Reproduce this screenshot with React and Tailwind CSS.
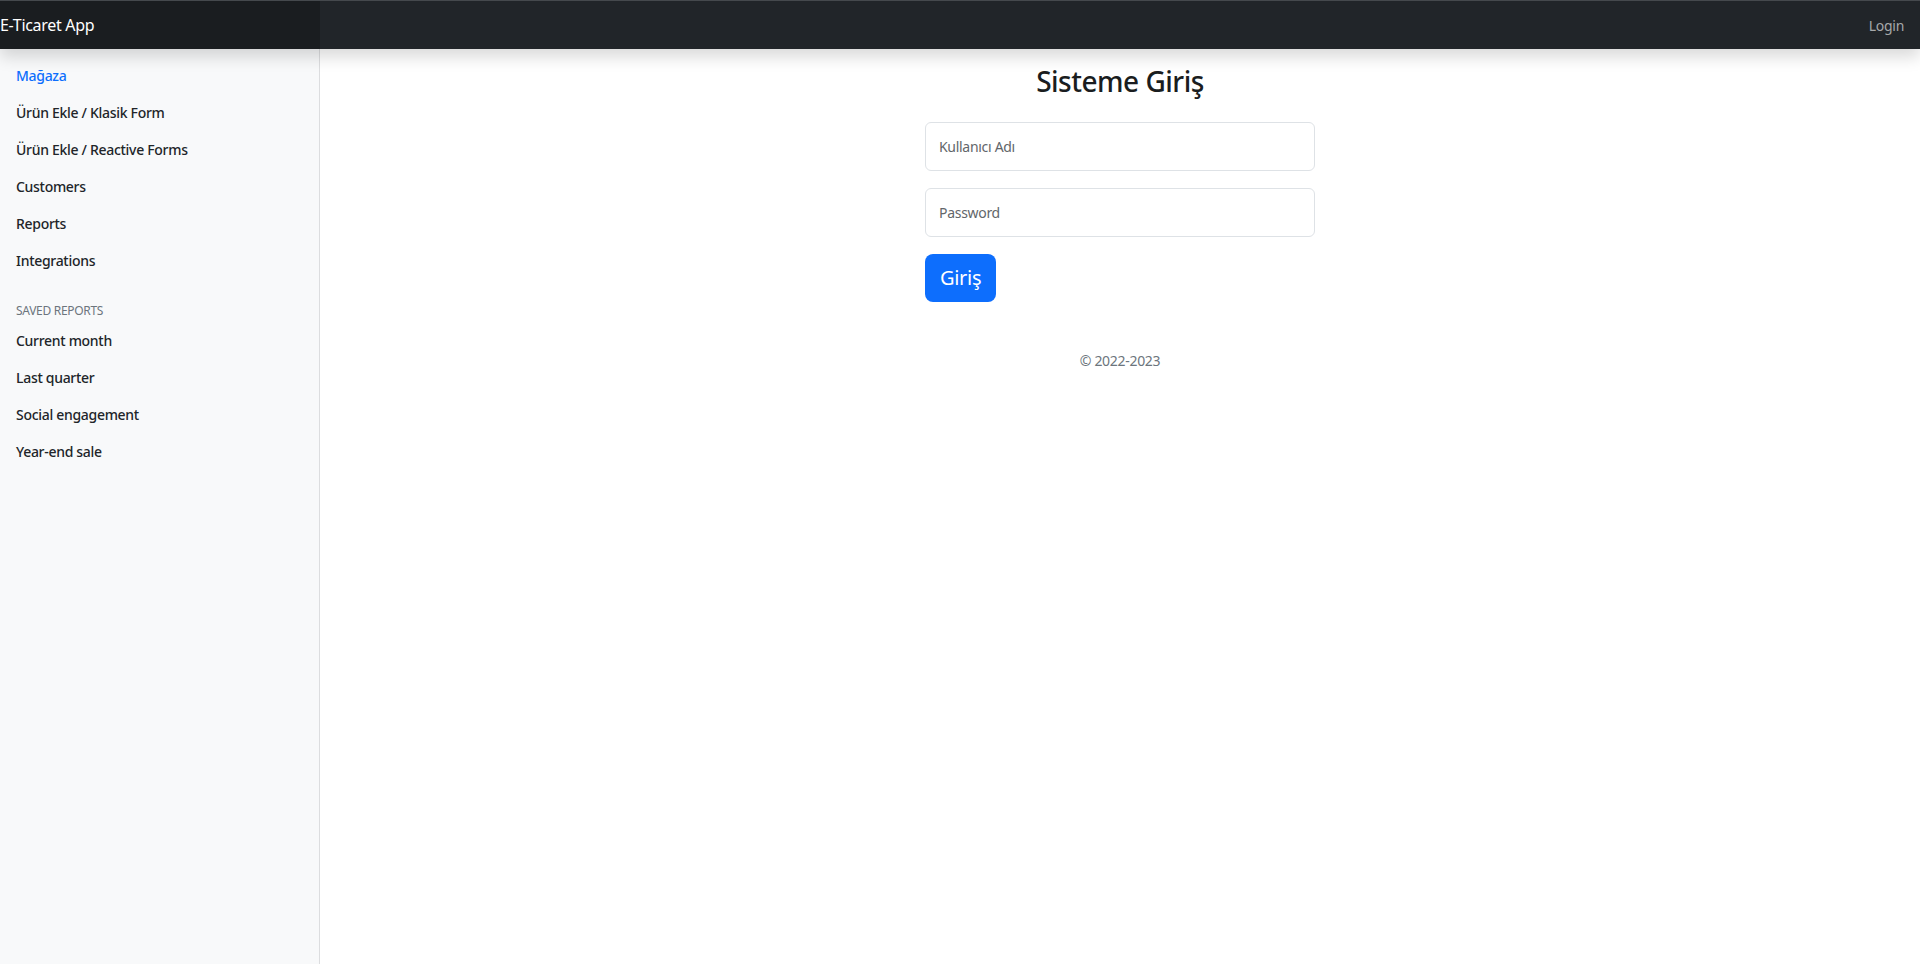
import React from 'react';

const font = { fontFamily: '"Segoe UI", "Noto Sans", "Open Sans", sans-serif' };

const mainLinks = [
  { label: 'Mağaza', active: true },
  { label: 'Ürün Ekle / Klasik Form' },
  { label: 'Ürün Ekle / Reactive Forms' },
  { label: 'Customers' },
  { label: 'Reports' },
  { label: 'Integrations' },
];

const savedReports = ['Current month', 'Last quarter', 'Social engagement', 'Year-end sale'];

// Sidebar link row
const NavLink = ({ label, active }) => (
  <a
    href="#"
    className={
      'block px-4 py-2 text-[14px] leading-[21px] font-medium ' +
      (active ? 'text-[#0d6efd]' : 'text-[#212529]')
    }
  >
    {label}
  </a>
);

export default function App() {
  return (
    <div className="flex h-screen flex-col bg-white tracking-[-0.3px]" style={font}>
      {/* Top navbar */}
      <header className="relative z-10 flex h-[49px] shrink-0 items-stretch border-t border-[#45494d] bg-[#212529] shadow-[0_8px_16px_rgba(0,0,0,0.15)]">
        <div className="flex w-[320px] items-center bg-[#1a1d20] text-[16px] text-white">
          E-Ticaret App
        </div>
        <div className="flex-1" />
        <a href="#" className="flex items-center px-4 text-[14px] text-[#a6a8aa]">
          Login
        </a>
      </header>

      <div className="flex min-h-0 flex-1">
        {/* Sidebar */}
        <aside className="w-[320px] shrink-0 border-r border-[#dcdddf] bg-[#f8f9fa] pt-[8px]">
          <nav className="flex flex-col">
            {mainLinks.map((l) => (
              <NavLink key={l.label} {...l} />
            ))}
          </nav>
          <h6 className="mt-6 mb-1 px-4 text-[12px] uppercase leading-[15px] text-[#6c757d]">
            Saved reports
          </h6>
          <nav className="flex flex-col">
            {savedReports.map((l) => (
              <NavLink key={l} label={l} />
            ))}
          </nav>
        </aside>

        {/* Main content */}
        <main className="flex-1 px-6">
          <div className="mx-auto w-[390px] pt-[15px]">
            <h1 className="mb-[24px] text-center text-[28px] font-medium leading-[34px] tracking-[-0.5px] text-[#1a1d20]">
              Sisteme Giriş
            </h1>
            <input
              type="text"
              placeholder="Kullanıcı Adı"
              className="block h-[49px] w-full rounded-[6px] border border-[#dee2e6] px-[13px] text-[14px] text-[#212529] outline-none placeholder:text-[#62666a]"
            />
            <input
              type="password"
              placeholder="Password"
              className="mt-[17px] block h-[49px] w-full rounded-[6px] border border-[#dee2e6] px-[13px] text-[14px] text-[#212529] outline-none placeholder:text-[#62666a]"
            />
            <button className="mt-[17px] h-[48px] rounded-[8px] bg-[#0d6efd] px-[15px] text-[20px] text-white">
              Giriş
            </button>
            <p className="mt-[48px] text-center text-[14px] text-[#6c757d]">© 2022-2023</p>
          </div>
        </main>
      </div>
    </div>
  );
}
